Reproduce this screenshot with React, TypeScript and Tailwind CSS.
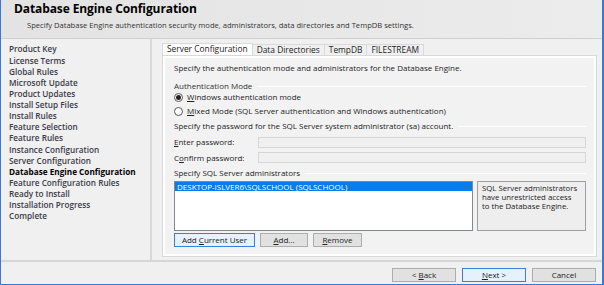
const navItems = [
  'Product Key',
  'License Terms',
  'Global Rules',
  'Microsoft Update',
  'Product Updates',
  'Install Setup Files',
  'Install Rules',
  'Feature Selection',
  'Feature Rules',
  'Instance Configuration',
  'Server Configuration',
  'Database Engine Configuration',
  'Feature Configuration Rules',
  'Ready to Install',
  'Installation Progress',
  'Complete',
];

const tabs = ['Server Configuration', 'Data Directories', 'TempDB', 'FILESTREAM'];

function GroupLabel({ text }: { text: string }) {
  return (
    <div className="flex items-center gap-[5px] h-[10px]">
      <span className="whitespace-nowrap">{text}</span>
      <div className="flex-1 h-px bg-[#d5d5d5] border-b border-white" />
    </div>
  );
}

function Radio({ checked, label, u }: { checked?: boolean; label: string; u: string }) {
  return (
    <div className="flex items-center gap-[4px] h-[12px]">
      <span className="w-[9px] h-[9px] rounded-full border border-[#555] bg-white flex items-center justify-center">
        {checked && <span className="w-[5px] h-[5px] rounded-full bg-[#222]" />}
      </span>
      <span>
        <span className="underline">{u}</span>
        {label}
      </span>
    </div>
  );
}

function Btn({ children, primary, w }: { children: React.ReactNode; primary?: boolean; w: string }) {
  return (
    <div
      className={`${w} h-[14px] flex items-center justify-center border ${
        primary ? 'border-[#3c7fd4] bg-[#e5f1fb]' : 'border-[#adadad] bg-[#e1e1e1]'
      }`}
    >
      <span className="whitespace-pre">{children}</span>
    </div>
  );
}

export default function App() {
  return (
    <div
      className="w-[604px] h-[285px] bg-[#f0f0f0] border-l border-r-2 border-b border-[#3b78d6] flex flex-col overflow-hidden text-[#222] text-[8px] leading-none"
      style={{ fontFamily: '"Open Sans", "Noto Sans", sans-serif' }}
    >
      {/* Header */}
      <div className="h-[39px] shrink-0 bg-gradient-to-r from-[#e3e3e3] to-[#ececec] border-b border-[#cfcfcf] pl-[13px] pt-[2px]">
        <div className="text-[12px] leading-[14px] font-bold text-black tracking-[-0.1px]">Database Engine Configuration</div>
        <div className="pl-[13px] pt-[6px] text-[7.6px] text-[#333]">
          Specify Database Engine authentication security mode, administrators, data directories and TempDB settings.
        </div>
      </div>

      {/* Middle */}
      <div className="flex-1 flex min-h-0">
        <div className="w-[151px] shrink-0 border-r-2 border-[#d8d8d8] pl-[8px] pt-[5px] flex flex-col text-[8.2px] font-semibold text-[#3a3a48]">
          {navItems.map((n) => (
            <div
              key={n}
              className={`h-[11.13px] flex items-center whitespace-nowrap ${
                n === 'Database Engine Configuration' ? 'font-bold text-black' : ''
              }`}
            >
              {n}
            </div>
          ))}
        </div>

        <div className="flex-1 pl-[10px] pr-[5px] pt-[4px] pb-[3px] flex flex-col">
          {/* Tabs */}
          <div className="flex h-[12px] items-end text-[8.4px]">
            {tabs.map((t, i) => (
              <div
                key={t}
                className={`px-[4px] flex items-center whitespace-nowrap border-t border-l border-r ${
                  i === 0
                    ? 'h-[12px] bg-white border-[#d9d9d9]'
                    : 'h-[11px] bg-[#f0f0f0] border-[#d9d9d9] -ml-px'
                }`}
              >
                {t}
              </div>
            ))}
          </div>
          <div className="flex-1 border border-[#d9d9d9] bg-white p-[2px]">
            <div className="h-full bg-[#f2f2f2] pl-[9px] pr-[8px] pt-[3px] flex flex-col">
              <div className="h-[13px] flex items-center">Specify the authentication mode and administrators for the Database Engine.</div>
              <div className="mt-[7px] text-[#333]">
                <GroupLabel text="Authentication Mode" />
              </div>
              <Radio checked u="W" label="indows authentication mode" />
              <div className="mt-[2px]">
                <Radio u="M" label="ixed Mode (SQL Server authentication and Windows authentication)" />
              </div>
              <div className="mt-[4px]">
                <GroupLabel text="Specify the password for the SQL Server system administrator (sa) account." />
              </div>
              <div className="flex items-center mt-[3px] h-[16px]">
                <span className="w-[84px]">
                  <span className="underline">E</span>nter password:
                </span>
                <div className="flex-1 h-[11px] border border-[#d6d6d6] bg-[#f0f0f0]" />
              </div>
              <div className="flex items-center h-[15px]">
                <span className="w-[84px]">
                  C<span className="underline">o</span>nfirm password:
                </span>
                <div className="flex-1 h-[11px] border border-[#d6d6d6] bg-[#f0f0f0]" />
              </div>
              <div className="mt-[3px]">
                <GroupLabel text="Specify SQL Server administrators" />
              </div>
              <div className="flex gap-[4px] mt-[3px] h-[50px]">
                <div className="w-[299px] border border-[#828790] bg-white">
                  <div className="h-[9px] bg-[#0a7ce8] text-white flex items-center pl-[2px]">
                    DESKTOP-ISLVER6\SQLSCHOOL (SQLSCHOOL)
                  </div>
                </div>
                <div className="flex-1 border border-[#a0a0a0] bg-[#eeeeee] pl-[4px] pr-[6px] pt-[2px] text-[7.8px] leading-[9px]">
                  SQL Server administrators have unrestricted access to the Database Engine.
                </div>
              </div>
              <div className="flex gap-[5px] mt-[2px]">
                <Btn primary w="w-[81px]">
                  Add <span className="underline">C</span>urrent User
                </Btn>
                <Btn w="w-[48px]">
                  <span className="underline">A</span>dd...
                </Btn>
                <Btn w="w-[49px]">
                  <span className="underline">R</span>emove
                </Btn>
              </div>
            </div>
          </div>
        </div>
      </div>

      {/* Footer */}
      <div className="h-[24px] shrink-0 border-t-2 border-[#d6d6d6] flex items-center justify-end gap-[6px] pr-[6px] pt-[3px]">
        <Btn w="w-[64px]">
          &lt; <span className="underline">B</span>ack
        </Btn>
        <Btn primary w="w-[64px]">
          <span className="underline">N</span>ext &gt;
        </Btn>
        <Btn w="w-[64px]">Cancel</Btn>
      </div>
    </div>
  );
}
